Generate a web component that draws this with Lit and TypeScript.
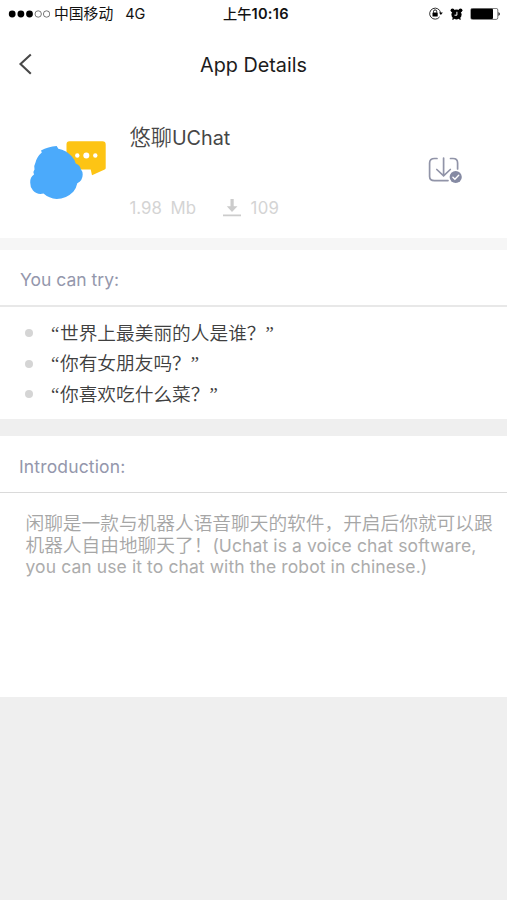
import { LitElement, html, css } from "lit";
import { customElement } from "lit/decorators.js";

const SUGGESTIONS = ["世界上最美丽的人是谁？", "你有女朋友吗？", "你喜欢吃什么菜？"];

@customElement("status-bar")
class StatusBar extends LitElement {
  static styles = css`
    :host { display: flex; align-items: center; height: 28px; box-sizing: border-box; color: #111; font-size: 14.8px; line-height: 28px; white-space: pre; }
    .side { flex: 1; display: flex; align-items: center; }
    .signal { margin-left: 8px; margin-right: 4px; }
    .net { margin-left: 12px; font-size: 14.5px; }
    .time { font-weight: 600; font-size: 14.6px; letter-spacing: .3px; margin-left: 11px; }
    .time .cjk { font-weight: 500; font-size: 14.2px; letter-spacing: 0; }
    .right { justify-content: flex-end; gap: 7px; padding-right: 6px; }
    svg { display: block; flex: none; }
  `;
  render() {
    return html`
      <div class="side">
        <svg class="signal" width="42" height="10" viewBox="0 0 42 10">
          <circle cx="4.2" cy="5" r="3.4" /><circle cx="12.9" cy="5" r="3.4" /><circle cx="21.5" cy="5" r="3.4" />
          <g fill="none" stroke="#555" stroke-width=".8"><circle cx="30.2" cy="5" r="3.2" /><circle cx="38.6" cy="5" r="3.2" /></g>
        </svg>
        <span>中国移动</span><span class="net">4G</span>
      </div>
      <span class="time"><span class="cjk">上午</span>10:16</span>
      <div class="side right">
        <svg width="15" height="14" viewBox="0 0 15 14">
          <path d="M11.6 9.900A5.500 5.500 0 1 1 12.600 5.800" fill="none" stroke="#333" stroke-width="1" />
          <path d="M11 5.600h3.800l-1.900 2.500z" />
          <rect x="4.500" y="5.500" width="5.200" height="4.100" rx=".5" />
          <path d="M5.500 5.700V4.500a1.600 1.600 0 0 1 3.200 0v1.200" fill="none" stroke="#111" />
        </svg>
        <svg width="13" height="13" viewBox="0 0 13 13">
          <circle cx="6.500" cy="6.500" r="5.100" /><circle cx="2.500" cy="2.300" r="1.900" /><circle cx="10.500" cy="2.300" r="1.900" />
          <path d="M3.600 10l-1 1.600M9.400 10l1 1.600" stroke="#000" stroke-width="1.400" />
          <path d="M6.900 3.800v3.400H4.500" fill="none" stroke="#fff" stroke-width="1" />
        </svg>
        <svg width="31" height="13" viewBox="0 0 31 13">
          <rect x=".8" y=".4" width="27" height="11" rx="1.600" fill="#fff" stroke="#555" stroke-width=".8" />
          <rect x="1" y=".7" width="22" height="10.400" rx="1" />
          <path d="M28.500 4q2.600 2 0 4z" />
        </svg>
      </div>`;
  }
}

@customElement("app-summary")
class AppSummary extends LitElement {
  static styles = css`
    :host { display: flex; height: 136px; box-sizing: border-box; }
    .logo { margin: 36px 0 0 29px; width: 78px; height: 62px; flex: none; }
    .info { margin-left: 22.5px; padding-top: 20px; flex: 1; }
    .name { font-size: 19.8px; line-height: 30px; color: #464646; white-space: nowrap; }
    .cjk { font-size: 21.2px; font-weight: 350; }
    .meta { display: flex; align-items: center; margin-top: 45px; height: 20px; line-height: 20px; font-size: 16.8px; color: #d4d4d4; }
    .size { word-spacing: 4px; width: 93px; white-space: nowrap; }
    .meta svg { margin-right: 10px; }
    .count { letter-spacing: .3px; }
    .get { margin: 54px 44px 0 0; }
    svg { display: block; flex: none; }
  `;
  render() {
    return html`
      <svg class="logo" viewBox="0 0 78 62">
        <path d="M40.5 3.200h33q3.200 0 3.200 3.200v23.600q0 1-1 1.500L63 37.200l-1.300-5.600H50L37.500 20V6.200q0-3 3-3z" fill="#fdc414" />
        <g fill="#fff"><circle cx="48.300" cy="17.500" r="2.200" /><circle cx="57.300" cy="17.400" r="3" /><circle cx="66.300" cy="17.500" r="2.200" /></g>
        <path d="M12 12.400Q19 8.600 27.700 8l1.600 2.700Q37 12 42.700 18.200q3.300 3.600 4 7.300 4.500 1.500 5 5.500 2 2.500 2 5.500 0 6-5.400 8.800-1 5-4 8.400Q37 61 27.700 61 20 60.600 14.500 55.600 8 57 4 52.500 1 49 1.200 44.500 1 39 5 36.500 3.500 34 5.500 31.500 4.500 28 6.500 24.500 8 18.500 12.800 14.500z" fill="#4baafb" />
      </svg>
      <div class="info">
        <div class="name"><span class="cjk">悠聊</span>UChat</div>
        <div class="meta">
          <span class="size">1.98 Mb</span>
          <svg width="18" height="18" viewBox="0 0 18 18" fill="#ccc"><path d="M7.500 0h3.200v7.200h3.800L9 13 3.800 7.200h3.700zM0 15.600h18v1.600H0z" /></svg>
          <span class="count">109</span>
        </div>
      </div>
      <svg class="get" width="35" height="30" viewBox="0 0 35 30" fill="none" stroke="#9194a8" stroke-width="1.700" stroke-linecap="round">
        <path d="M9 2.500H6.500Q1.600 2.500 1.600 7v13.500Q1.600 24.600 6.500 24.600H20M22.500 2.500H25q4.600 0 4.600 4.500v6M15.600 2v17.500M8.800 13.500l6.800 6.300 6.700-6.300" />
        <circle cx="27.700" cy="21" r="6.100" fill="#858aa3" stroke="none" />
        <path d="M24.900 21.200l2 2 3.800-3.900" stroke="#fff" stroke-width="1.400" />
      </svg>`;
  }
}

@customElement("app-root")
class AppRoot extends LitElement {
  static styles = css`
    :host { display: block; height: 900px; background: #efefef; overflow: hidden; font-family: Inter, "Noto Sans CJK SC", sans-serif; }
    .top { background: #fff; }
    .nav { display: grid; grid-template-columns: 60px 1fr 60px; align-items: center; height: 74px; text-align: center; font-size: 19.8px; color: #1c1c1c; }
    .back { margin-left: 18px; margin-top: -2px; display: block; }
    .gap { height: 12px; background: #f6f6f6; }
    .gap.wide { height: 17px; background: #efefef; }
    .head { box-sizing: border-box; height: 57px; padding: 3px 20px 0; border-bottom: 2px solid #e8e8e8; background: #fff; font-size: 17.5px; line-height: 53px; color: #9497ac; }
    .head.thin { border-bottom: 1px solid #dadada; padding-top: 4px; padding-left: 19px; letter-spacing: .15px; }
    .list { margin: 0; padding: 11px 0 9.5px 25px; list-style: none; background: #fff; }
    .item { display: flex; align-items: center; height: 30.5px; font-size: 18.7px; line-height: 30px; font-weight: 350; color: #404040; white-space: nowrap; }
    .text { display: flex; padding-top: 1px; }
    .dot { width: 8px; height: 8px; border-radius: 50%; background: #d5d5d5; margin-right: 18px; }
    .quote { font-family: "Liberation Serif", serif; width: 9px; font-weight: 400; }
    .intro { box-sizing: border-box; height: 204px; padding: 20px 0 0 25.5px; background: #fff; font-size: 18.7px; line-height: 21.7px; font-weight: 350; color: #a6a6a6; white-space: nowrap; }
    .latin { font-size: 17.5px; font-weight: 400; letter-spacing: .1px; color: #acacac; }
    .line { height: 21.7px; }
  `;
  render() {
    return html`
      <div class="top">
        <status-bar></status-bar>
        <div class="nav">
          <svg class="back" width="16" height="24" viewBox="0 0 16 24"><path d="M12.800 2.500L2.500 12l10.300 9.800" fill="none" stroke="#484848" stroke-width="2.100" /></svg>
          <span>App Details</span>
        </div>
        <app-summary></app-summary>
      </div>
      <div class="gap"></div>
      <div class="head">You can try:</div>
      <ul class="list">${SUGGESTIONS.map((s) => html`<li class="item"><span class="dot"></span><span class="text"><span class="quote">“</span>${s}<span class="quote">”</span></span></li>`)}</ul>
      <div class="gap wide"></div>
      <div class="head thin">Introduction:</div>
      <div class="intro">
        <div class="line">闲聊是一款与机器人语音聊天的软件，开启后你就可以跟</div>
        <div class="line">机器人自由地聊天了！<span class="latin">(Uchat is a voice chat software,</span></div>
        <div class="line"><span class="latin">you can use it to chat with the robot in chinese.)</span></div>
      </div>`;
  }
}
